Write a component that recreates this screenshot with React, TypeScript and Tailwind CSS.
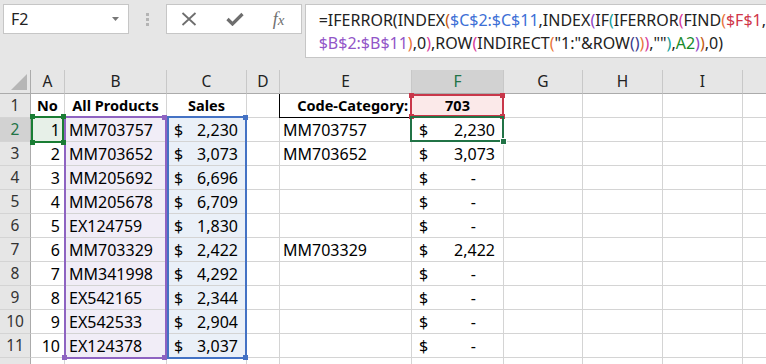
import React from "react";

const COLS = [31, 34, 102, 80, 33, 132, 92, 79, 80, 80, 30];
const LETTERS = ["", "A", "B", "C", "D", "E", "F", "G", "H", "I", ""];

type Row = { no: string; prod: string; sales: string; e: string; f: string };
const DATA: Row[] = [
  { no: "1", prod: "MM703757", sales: "2,230", e: "MM703757", f: "2,230" },
  { no: "2", prod: "MM703652", sales: "3,073", e: "MM703652", f: "3,073" },
  { no: "3", prod: "MM205692", sales: "6,696", e: "", f: "-" },
  { no: "4", prod: "MM205678", sales: "6,709", e: "", f: "-" },
  { no: "5", prod: "EX124759", sales: "1,830", e: "", f: "-" },
  { no: "6", prod: "MM703329", sales: "2,422", e: "MM703329", f: "2,422" },
  { no: "7", prod: "MM341998", sales: "4,292", e: "", f: "-" },
  { no: "8", prod: "EX542165", sales: "2,344", e: "", f: "-" },
  { no: "9", prod: "EX542533", sales: "2,904", e: "", f: "-" },
  { no: "10", prod: "EX124378", sales: "3,037", e: "", f: "-" },
];

const K = "text-[#222222]";
const L2 = "text-[#c55a11]";
const L3 = "text-[#8e44c4]";
const L4 = "text-[#13a09a]";
const L5 = "text-[#d6399a]";
const L6 = "text-[#e8743b]";
const L7 = "text-[#3a3a8c]";
const BLUE = "text-[#3d6fd6]";
const PURPLE = "text-[#9255c8]";
const RED = "text-[#d0364a]";
const GREEN = "text-[#178a2a]";

const line1: [string, string][] = [
  ["=IFERROR(INDEX", K],
  ["(", L2],
  ["$C$2:$C$11", BLUE],
  [",INDEX", K],
  ["(", L3],
  ["IF", K],
  ["(", L4],
  ["IFERROR", K],
  ["(", L5],
  ["FIND", K],
  ["(", L6],
  ["$F$1", RED],
  [",", K],
];
const line2: [string, string][] = [
  ["$B$2:$B$11", PURPLE],
  [")", L6],
  [",0", K],
  [")", L5],
  [",ROW", K],
  ["(", L5],
  ["INDIRECT", K],
  ["(", L6],
  ['"1:"&ROW', K],
  ["()", L7],
  [")", L6],
  [")", L5],
  [',""', K],
  [")", L4],
  [",", K],
  ["A2", GREEN],
  [")", L3],
  [")", L2],
  [",0)", K],
];

function Cell({
  children,
  className = "",
}: {
  children?: React.ReactNode;
  className?: string;
}) {
  return (
    <div
      className={
        "h-[24px] border-r border-b border-[#d4d4d4] flex items-center overflow-hidden whitespace-nowrap " +
        className
      }
    >
      {children}
    </div>
  );
}

function Acct({ v, bg = "" }: { v: string; bg?: string }) {
  return (
    <Cell className={"justify-between pl-[7px] " + (v === "-" ? "pr-[27px] " : "pr-[8px] ") + bg}>
      <span>$</span>
      <span>{v}</span>
    </Cell>
  );
}

function Sq({ x, y, c }: { x: number; y: number; c: string }) {
  return <div className={"absolute w-[5px] h-[5px] " + c} style={{ left: x, top: y }} />;
}

export default function App() {
  return (
    <div className="relative w-[766px] h-[364px] overflow-hidden bg-[#e6e6e6] font-['Noto_Sans',sans-serif] text-black">
      {/* Formula bar area */}
      <div className="h-[70px] flex items-start pt-[4px] pl-[3px]">
        <div className="w-[127px] h-[30px] bg-white border border-[#c6c6c6] flex items-center justify-between pl-[7px] pr-[9px]">
          <span className="text-[16px] text-[#222]">F2</span>
          <svg width="7" height="4" viewBox="0 0 7 4">
            <path d="M0 0 L7 0 L3.5 4 Z" fill="#777" />
          </svg>
        </div>
        <div className="w-[37px] h-[30px] flex flex-col items-center justify-center gap-[2px]">
          <div className="w-[3px] h-[3px] bg-[#b4b4b4]" />
          <div className="w-[3px] h-[3px] bg-[#b4b4b4]" />
          <div className="w-[3px] h-[3px] bg-[#b4b4b4]" />
        </div>
        <div className="w-[137px] h-[30px] bg-white border border-[#c6c6c6] flex items-center pl-[14px] gap-[29px]">
          <svg width="16" height="14" viewBox="0 0 16 14">
            <path d="M1.5 1 L14.5 13 M14.5 1 L1.5 13" stroke="#6e6e6e" strokeWidth="1.8" />
          </svg>
          <svg width="18" height="14" viewBox="0 0 18 14">
            <path d="M1.5 7 L6.5 12 L16.5 2" stroke="#6e6e6e" strokeWidth="3.2" fill="none" />
          </svg>
          <span className="font-['Liberation_Serif',serif] italic text-[18px] text-[#707070] leading-none">
            f<span className="text-[15px]">x</span>
          </span>
        </div>
        <div className="ml-[3px] flex-1 h-[54px] bg-white border border-[#c6c6c6] border-r-0 pl-[13px] pt-[4px] font-['Noto_Sans',sans-serif] text-[16px] leading-[23px] whitespace-nowrap">
          <div>
            {line1.map(([t, c], i) => (
              <span key={i} className={c}>
                {t}
              </span>
            ))}
          </div>
          <div>
            {line2.map(([t, c], i) => (
              <span key={i} className={c}>
                {t}
              </span>
            ))}
          </div>
        </div>
      </div>

      {/* Sheet */}
      <div
        className="grid text-[16px]"
        style={{ gridTemplateColumns: COLS.map((c) => c + "px").join(" ") }}
      >
        {/* Column header row */}
        {LETTERS.map((l, i) =>
          i === 0 ? (
            <div
              key={i}
              className="h-[24px] border-r border-b border-r-[#ababab] border-b-[#ababab] bg-[#e6e6e6] relative"
            >
              <svg className="absolute left-[11px] top-[4px]" width="16" height="16" viewBox="0 0 16 16">
                <path d="M16 0 L16 16 L0 16 Z" fill="#b6b6b6" />
              </svg>
            </div>
          ) : (
            <div
              key={i}
              className={
                "h-[24px] border-r border-b border-r-[#c8c8c8] border-b-[#ababab] flex items-center justify-center text-[15.5px] " +
                (l === "F" ? "bg-[#d2d2d2] text-[#217346]" : "bg-[#e6e6e6] text-[#222]")
              }
            >
              {l}
            </div>
          )
        )}

        {/* Row 1 */}
        <div className="h-[24px] border-r border-b border-r-[#ababab] border-b-[#d4d4d4] bg-[#e6e6e6] flex items-center justify-center text-[15.5px] text-[#333]">
          1
        </div>
        <Cell className="justify-center font-bold text-[14.5px] bg-white">No</Cell>
        <Cell className="justify-center font-bold text-[14.5px] bg-white">All Products</Cell>
        <Cell className="justify-center font-bold text-[14.5px] bg-white">Sales</Cell>
        <Cell className="bg-white" />
        <Cell className="justify-end pr-[3px] font-bold text-[14.5px] bg-white border-l border-l-black !border-b-black -ml-px">
          Code-Category:
        </Cell>
        <Cell className="justify-center font-bold text-[14.5px] bg-[#fbe9e9]">703</Cell>
        <Cell className="bg-white" />
        <Cell className="bg-white" />
        <Cell className="bg-white" />
        <Cell className="bg-white" />

        {DATA.map((r, idx) => {
          const rowNum = idx + 2;
          const sel = rowNum === 2;
          return (
            <React.Fragment key={idx}>
              <div
                className={
                  "h-[24px] border-r border-b border-r-[#ababab] border-b-[#d4d4d4] flex items-center justify-center text-[15.5px] " +
                  (sel ? "bg-[#d2d2d2] text-[#217346]" : "bg-[#e6e6e6] text-[#333]")
                }
              >
                {rowNum}
              </div>
              <Cell className={"justify-end pr-[4px] " + (sel ? "bg-[#e7f0e8]" : "bg-white")}>{r.no}</Cell>
              <Cell className="pl-[4px] bg-[#f1edf7]">{r.prod}</Cell>
              <Acct v={r.sales} bg="bg-[#eaf0f8]" />
              <Cell className="bg-white" />
              <Cell className="pl-[3px] bg-white">{r.e}</Cell>
              <Acct v={r.f} bg="bg-white" />
              <Cell className="bg-white" />
              <Cell className="bg-white" />
              <Cell className="bg-white" />
              <Cell className="bg-white" />
            </React.Fragment>
          );
        })}

        {/* Row 12 partial */}
        <div className="h-[24px] border-r border-r-[#ababab] bg-[#e6e6e6]" />
        {COLS.slice(1).map((_, i) => (
          <div key={i} className="h-[24px] border-r border-[#d4d4d4] bg-white" />
        ))}
      </div>

      {/* Reference highlight overlays */}
      {/* C2:C11 blue */}
      <div className="absolute border-2 border-[#4472c4]" style={{ left: 167, top: 116, width: 80, height: 243 }} />
      <Sq x={243} y={115} c="bg-[#4472c4]" />
      <Sq x={243} y={355} c="bg-[#4472c4]" />
      {/* B2:B11 purple */}
      <div className="absolute border-2 border-[#8e63c1]" style={{ left: 64, top: 116, width: 103, height: 243 }} />
      <Sq x={162} y={115} c="bg-[#8e63c1]" />
      <Sq x={162} y={355} c="bg-[#8e63c1]" />
      <Sq x={62} y={355} c="bg-[#8e63c1]" />
      {/* A2 green */}
      <div className="absolute border-2 border-[#1a7d34]" style={{ left: 31, top: 116, width: 33, height: 27 }} />
      <Sq x={61} y={114} c="bg-[#1a7d34]" />
      <Sq x={61} y={140} c="bg-[#1a7d34]" />
      <Sq x={30} y={140} c="bg-[#1a7d34]" />
      <Sq x={30} y={114} c="bg-[#1a7d34]" />
      {/* F1 red */}
      <div className="absolute border-2 border-[#c8374a]" style={{ left: 410, top: 94, width: 94, height: 23 }} />
      <Sq x={409} y={93} c="bg-[#c8374a]" />
      <Sq x={500} y={93} c="bg-[#c8374a]" />
      <Sq x={409} y={114} c="bg-[#c8374a]" />
      <Sq x={500} y={114} c="bg-[#c8374a]" />
      {/* F2 active cell */}
      <div className="absolute border-2 border-[#217346]" style={{ left: 410, top: 116, width: 94, height: 26 }} />
      <div
        className="absolute w-[7px] h-[7px] bg-[#217346] border border-white"
        style={{ left: 500, top: 138 }}
      />
    </div>
  );
}
